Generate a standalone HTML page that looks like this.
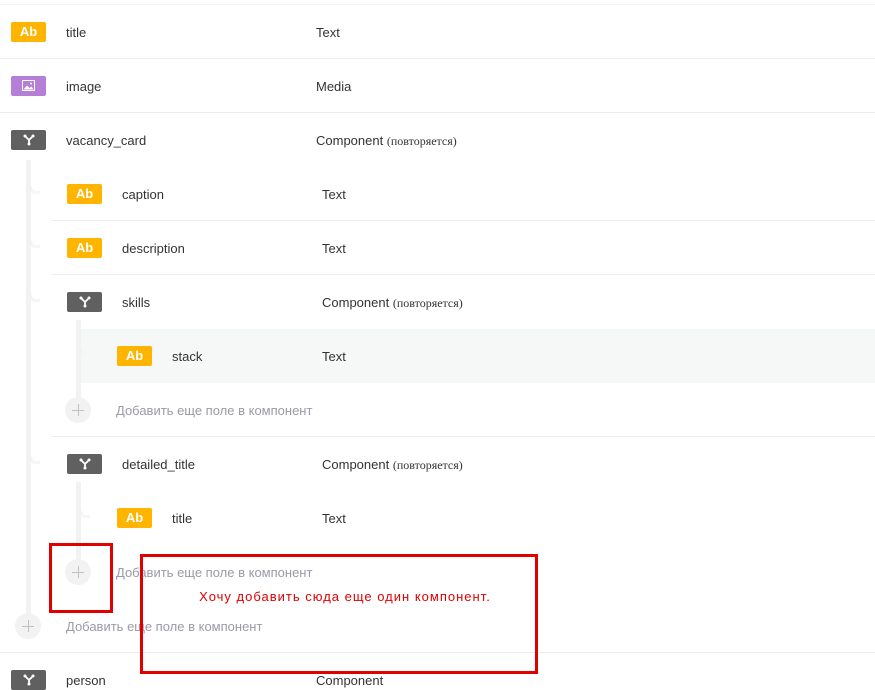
<!DOCTYPE html>
<html><head><meta charset="utf-8"><style>
*{margin:0;padding:0;box-sizing:border-box}
body{width:875px;height:690px;background:#fff;position:relative;overflow:hidden;font-family:"Liberation Sans","DejaVu Sans",sans-serif;font-size:13px;color:#333}
.a{position:absolute}
.sep{position:absolute;height:1px;background:#ececec;right:0}
.b{position:absolute;width:35px;height:20px;border-radius:2px;color:#fff;font-weight:bold;font-size:13px;text-align:center;line-height:20px}
.y{background:#ffb400}
.g{background:#606060}
.p{background:#b57fd8}
.t{position:absolute;line-height:16px}
.r{font-family:"Liberation Serif",serif;font-size:12px}
.vl{position:absolute;width:5px;background:#f2f2f2}
.br{position:absolute;width:14px;height:10px;border-left:5px solid #f2f2f2;border-bottom:3px solid #f6f6f6;border-bottom-left-radius:10px}
.pl{position:absolute;width:26px;height:26px;border-radius:50%;background:#f2f2f2}
.pl::before{content:"";position:absolute;left:7px;top:12.5px;width:12px;height:1px;background:#c0c0c0}
.pl::after{content:"";position:absolute;left:12.5px;top:7px;width:1px;height:12px;background:#c0c0c0}
.add{position:absolute;color:#9a9aa8;line-height:16px}
svg{display:block;margin:4px auto 0}
</style></head><body>
<div class="sep" style="left:0;top:4px;background:#f5f5f5"></div>
<div class="sep" style="left:0;top:58px"></div>
<div class="sep" style="left:0;top:112px"></div>
<div class="sep" style="left:52px;top:220px"></div>
<div class="sep" style="left:52px;top:274px"></div>
<div class="sep" style="left:52px;top:436px"></div>
<div class="sep" style="left:0;top:652px"></div>
<div class="a" style="left:80px;top:329px;width:795px;height:54px;background:#f6f7f7"></div>

<div class="vl" style="left:26px;top:160px;height:454px"></div>
<div class="br" style="left:26px;top:184px"></div>
<div class="br" style="left:26px;top:238px"></div>
<div class="br" style="left:26px;top:292px"></div>
<div class="br" style="left:26px;top:454px"></div>
<div class="vl" style="left:76px;top:320px;height:80px"></div>
<div class="br" style="left:76px;top:346px"></div>
<div class="vl" style="left:76px;top:482px;height:80px"></div>
<div class="br" style="left:76px;top:508px"></div>

<div class="b y" style="left:11px;top:22px">Ab</div><div class="t" style="left:66px;top:25px">title</div><div class="t" style="left:316px;top:25px">Text</div>
<div class="b p" style="left:11px;top:76px"><svg width="13" height="11" viewBox="0 0 13 11"><rect x="0.5" y="0.5" width="12" height="10" fill="#b57fd8" stroke="#fff"/><path d="M1.5 9.5L5 5.5l2.5 2.5 2-1.5 2 3z" fill="#fff"/><circle cx="9" cy="3.5" r="1" fill="#fff"/></svg></div><div class="t" style="left:66px;top:79px">image</div><div class="t" style="left:316px;top:79px">Media</div>
<div class="b g" style="left:11px;top:130px"><svg width="12" height="12" viewBox="0 0 12 12"><path d="M2 2L6 6L10 2M6 6V10" stroke="#fff" stroke-width="1.8" fill="none"/><circle cx="2" cy="2" r="1.5" fill="#fff"/><circle cx="10" cy="2" r="1.5" fill="#fff"/><circle cx="6" cy="10" r="1.5" fill="#fff"/></svg></div><div class="t" style="left:66px;top:133px">vacancy_card</div><div class="t" style="left:316px;top:133px">Component <span class="r">(повторяется)</span></div>

<div class="b y" style="left:67px;top:184px">Ab</div><div class="t" style="left:122px;top:187px">caption</div><div class="t" style="left:322px;top:187px">Text</div>
<div class="b y" style="left:67px;top:238px">Ab</div><div class="t" style="left:122px;top:241px">description</div><div class="t" style="left:322px;top:241px">Text</div>
<div class="b g" style="left:67px;top:292px"><svg width="12" height="12" viewBox="0 0 12 12"><path d="M2 2L6 6L10 2M6 6V10" stroke="#fff" stroke-width="1.8" fill="none"/><circle cx="2" cy="2" r="1.5" fill="#fff"/><circle cx="10" cy="2" r="1.5" fill="#fff"/><circle cx="6" cy="10" r="1.5" fill="#fff"/></svg></div><div class="t" style="left:122px;top:295px">skills</div><div class="t" style="left:322px;top:295px">Component <span class="r">(повторяется)</span></div>
<div class="b y" style="left:117px;top:346px">Ab</div><div class="t" style="left:172px;top:349px">stack</div><div class="t" style="left:322px;top:349px">Text</div>
<div class="pl" style="left:65px;top:397px"></div><div class="add" style="left:116px;top:403px">Добавить еще поле в компонент</div>
<div class="b g" style="left:67px;top:454px"><svg width="12" height="12" viewBox="0 0 12 12"><path d="M2 2L6 6L10 2M6 6V10" stroke="#fff" stroke-width="1.8" fill="none"/><circle cx="2" cy="2" r="1.5" fill="#fff"/><circle cx="10" cy="2" r="1.5" fill="#fff"/><circle cx="6" cy="10" r="1.5" fill="#fff"/></svg></div><div class="t" style="left:122px;top:457px">detailed_title</div><div class="t" style="left:322px;top:457px">Component <span class="r">(повторяется)</span></div>
<div class="b y" style="left:117px;top:508px">Ab</div><div class="t" style="left:172px;top:511px">title</div><div class="t" style="left:322px;top:511px">Text</div>
<div class="pl" style="left:65px;top:559px"></div><div class="add" style="left:116px;top:565px">Добавить еще поле в компонент</div>
<div class="pl" style="left:15px;top:613px"></div><div class="add" style="left:66px;top:619px">Добавить еще поле в компонент</div>
<div class="b g" style="left:11px;top:670px"><svg width="12" height="12" viewBox="0 0 12 12"><path d="M2 2L6 6L10 2M6 6V10" stroke="#fff" stroke-width="1.8" fill="none"/><circle cx="2" cy="2" r="1.5" fill="#fff"/><circle cx="10" cy="2" r="1.5" fill="#fff"/><circle cx="6" cy="10" r="1.5" fill="#fff"/></svg></div><div class="t" style="left:66px;top:673px">person</div><div class="t" style="left:316px;top:673px">Component</div>

<div class="a" style="left:49px;top:543px;width:64px;height:70px;border:3px solid #e00000"></div>
<div class="a" style="left:140px;top:554px;width:398px;height:120px;border:3px solid #e00000"></div>
<div class="a" style="left:140px;top:589px;width:410px;text-align:center;color:#e00000;font-size:13px;letter-spacing:1px">Хочу добавить сюда еще один компонент.</div>
</body></html>
